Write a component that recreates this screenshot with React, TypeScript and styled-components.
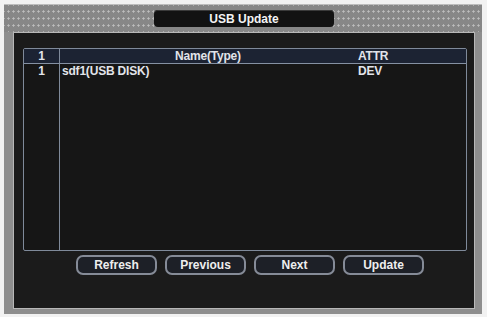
import React from "react";
import styled, { createGlobalStyle } from "styled-components";

const Global = createGlobalStyle`
  html, body {
    margin: 0;
    padding: 0;
    background: #f2f2f2;
  }
  body {
    font-family: "Liberation Sans", Arial, sans-serif;
  }
`;

const Window = styled.div`
  margin: 4px 5px 3px 4px;
  width: 478px;
  height: 310px;
  box-sizing: border-box;
  background: #8e8e8e;
  padding: 0 7px 5px 9px;
  display: flex;
  flex-direction: column;
  border-top: 1px solid #bdbdbd;
`;

const TitleBar = styled.div`
  height: 27px;
  flex: none;
  margin: 0 -7px 0 -9px;
  display: flex;
  align-items: center;
  justify-content: center;
  background-color: #878787;
  background-image: radial-gradient(circle, #bdbdbd 0.9px, transparent 1.3px);
  background-size: 5px 7px;
  background-position: 2px 3px;
  padding-left: 2px;
`;

const TitleTab = styled.div`
  width: 180px;
  height: 17px;
  background: #121212;
  border-radius: 4px;
  box-shadow: inset 0 1px 0 #3a3a3a;
  color: #f4f4f4;
  font-size: 12px;
  font-weight: bold;
  display: flex;
  align-items: center;
  justify-content: center;
`;

const Panel = styled.div`
  flex: 1;
  background: #1b1b1b;
  border: 1px solid #b8b8b8;
  padding: 15px 8px 0 9px;
  display: flex;
  flex-direction: column;
`;

const Table = styled.div`
  width: 444px;
  height: 203px;
  box-sizing: border-box;
  border: 1px solid #7f8a9a;
  border-radius: 2px;
  display: flex;
  flex-direction: column;
  background: #161616;
`;

const Row = styled.div<{ head?: boolean }>`
  display: grid;
  grid-template-columns: 36px 296px 1fr;
  height: ${(p) => (p.head ? "14px" : "auto")};
  background: ${(p) => (p.head ? "#1c2333" : "transparent")};
  border-bottom: ${(p) => (p.head ? "1px solid #8591a3" : "none")};
  flex: ${(p) => (p.head ? "none" : "1")};
`;

const Cell = styled.div<{ align?: string; divider?: boolean }>`
  color: #e2e4ea;
  font-size: 12px;
  font-weight: bold;
  line-height: 14px;
  text-align: ${(p) => p.align || "left"};
  border-right: ${(p) => (p.divider ? "1px solid #7f8a9a" : "none")};
  padding: 0 2px;
  white-space: nowrap;
  letter-spacing: -0.2px;
`;

const Buttons = styled.div`
  display: flex;
  gap: 8px;
  margin-top: 4px;
  padding-left: 53px;
`;

const Button = styled.button`
  width: 81px;
  height: 20px;
  box-sizing: border-box;
  border: 2px solid #858b97;
  border-radius: 7px;
  background: #1d2027;
  color: #eeeeee;
  font-family: "Liberation Sans", Arial, sans-serif;
  font-size: 12px;
  font-weight: bold;
  padding: 0;
  display: flex;
  align-items: center;
  justify-content: center;
`;

const files = [{ name: "sdf1(USB DISK)", attr: "DEV" }];

export default function App() {
  return (
    <>
      <Global />
      <Window>
        <TitleBar>
          <TitleTab>USB Update</TitleTab>
        </TitleBar>
        <Panel>
          <Table>
            <Row head>
              <Cell align="center" divider>1</Cell>
              <Cell align="center">Name(Type)</Cell>
              <Cell>ATTR</Cell>
            </Row>
            <Row>
              <Cell align="center" divider>
                {files.map((_, i) => (
                  <div key={i}>{i + 1}</div>
                ))}
              </Cell>
              <Cell>
                {files.map((f) => (
                  <div key={f.name}>{f.name}</div>
                ))}
              </Cell>
              <Cell>
                {files.map((f) => (
                  <div key={f.name}>{f.attr}</div>
                ))}
              </Cell>
            </Row>
          </Table>
          <Buttons>
            <Button>Refresh</Button>
            <Button>Previous</Button>
            <Button>Next</Button>
            <Button>Update</Button>
          </Buttons>
        </Panel>
      </Window>
    </>
  );
}
